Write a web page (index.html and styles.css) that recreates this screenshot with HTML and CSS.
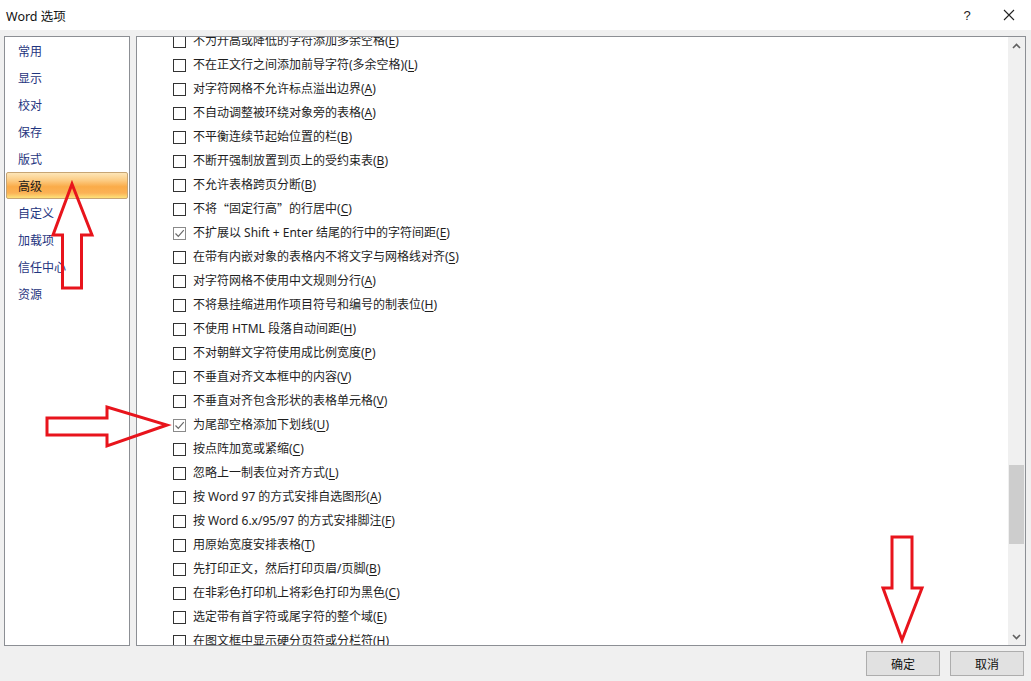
FILE: index.html
```html
<!DOCTYPE html>
<html lang="zh-CN">
<head>
<meta charset="utf-8">
<title>Word 选项</title>
<link rel="stylesheet" href="styles.css">
</head>
<body>
<div class="window">
  <div class="titlebar">
    <span class="title">Word 选项</span>
    <span class="tb-help">?</span>
    <span class="tb-close"><svg width="12" height="12" viewBox="0 0 12 12"><path d="M1 1 L11 11 M11 1 L1 11" stroke="#222" stroke-width="1.1" fill="none"/></svg></span>
  </div>
  <div class="main">
    <nav class="nav">
      <div class="nav-item">常用</div>
      <div class="nav-item">显示</div>
      <div class="nav-item">校对</div>
      <div class="nav-item">保存</div>
      <div class="nav-item">版式</div>
      <div class="nav-item active">高级</div>
      <div class="nav-item">自定义</div>
      <div class="nav-item">加载项</div>
      <div class="nav-item">信任中心</div>
      <div class="nav-item">资源</div>
    </nav>
    <section class="content">
      <div class="scroll-area">
        <ul class="opts">
          <li><span class="cb"></span>不为升高或降低的字符添加多余空格(<u>E</u>)</li>
          <li><span class="cb"></span>不在正文行之间添加前导字符(多余空格)(<u>L</u>)</li>
          <li><span class="cb"></span>对字符网格不允许标点溢出边界(<u>A</u>)</li>
          <li><span class="cb"></span>不自动调整被环绕对象旁的表格(<u>A</u>)</li>
          <li><span class="cb"></span>不平衡连续节起始位置的栏(<u>B</u>)</li>
          <li><span class="cb"></span>不断开强制放置到页上的受约束表(<u>B</u>)</li>
          <li><span class="cb"></span>不允许表格跨页分断(<u>B</u>)</li>
          <li><span class="cb"></span>不将<span class="q">“</span>固定行高<span class="q">”</span>的行居中(<u>C</u>)</li>
          <li><span class="cb checked"><svg width="11" height="11" viewBox="0 0 11 11"><path d="M1.5 5.5 L4.3 8.3 L9.8 2.2" stroke="#6a6a6a" stroke-width="1.2" fill="none"/></svg></span>不扩展以 Shift + Enter 结尾的行中的字符间距(<u>E</u>)</li>
          <li><span class="cb"></span>在带有内嵌对象的表格内不将文字与网格线对齐(<u>S</u>)</li>
          <li><span class="cb"></span>对字符网格不使用中文规则分行(<u>A</u>)</li>
          <li><span class="cb"></span>不将悬挂缩进用作项目符号和编号的制表位(<u>H</u>)</li>
          <li><span class="cb"></span>不使用 HTML 段落自动间距(<u>H</u>)</li>
          <li><span class="cb"></span>不对朝鲜文字符使用成比例宽度(<u>P</u>)</li>
          <li><span class="cb"></span>不垂直对齐文本框中的内容(<u>V</u>)</li>
          <li><span class="cb"></span>不垂直对齐包含形状的表格单元格(<u>V</u>)</li>
          <li><span class="cb checked"><svg width="11" height="11" viewBox="0 0 11 11"><path d="M1.5 5.5 L4.3 8.3 L9.8 2.2" stroke="#6a6a6a" stroke-width="1.2" fill="none"/></svg></span>为尾部空格添加下划线(<u>U</u>)</li>
          <li><span class="cb"></span>按点阵加宽或紧缩(<u>C</u>)</li>
          <li><span class="cb"></span>忽略上一制表位对齐方式(<u>L</u>)</li>
          <li><span class="cb"></span>按 Word 97 的方式安排自选图形(<u>A</u>)</li>
          <li><span class="cb"></span>按 Word 6.x/95/97 的方式安排脚注(<u>F</u>)</li>
          <li><span class="cb"></span>用原始宽度安排表格(<u>T</u>)</li>
          <li><span class="cb"></span>先打印正文，然后打印页眉/页脚(<u>B</u>)</li>
          <li><span class="cb"></span>在非彩色打印机上将彩色打印为黑色(<u>C</u>)</li>
          <li><span class="cb"></span>选定带有首字符或尾字符的整个域(<u>E</u>)</li>
          <li><span class="cb"></span>在图文框中显示硬分页符或分栏符(<u>H</u>)</li>
        </ul>
      </div>
      <div class="scrollbar">
        <div class="sb-btn"><svg width="9" height="6" viewBox="0 0 9 6"><path d="M1 5 L4.5 1.5 L8 5" stroke="#606060" stroke-width="1.6" fill="none"/></svg></div>
        <div class="sb-track">
          <div class="sb-thumb"></div>
        </div>
        <div class="sb-btn"><svg width="9" height="6" viewBox="0 0 9 6"><path d="M1 1 L4.5 4.5 L8 1" stroke="#606060" stroke-width="1.6" fill="none"/></svg></div>
      </div>
    </section>
  </div>
  <div class="footer">
    <button class="btn">确定</button>
    <button class="btn">取消</button>
  </div>
</div>
<svg class="annot" width="1031" height="681" viewBox="0 0 1031 681">
  <g fill="none" stroke="#e8141c" stroke-width="3" stroke-linejoin="miter">
    <path d="M72 184 L92 235 L81.5 235 L81.5 288 L62.5 288 L62.5 235 L53 235 Z"/>
    <path d="M47 418 L107 418 L107 407 L167 425 L107 446 L107 435 L47 435 Z"/>
    <path d="M892 537 L912 537 L912 588 L922 588 L902 640 L883 588 L892 588 Z"/>
  </g>
</svg>
</body>
</html>
```
FILE: styles.css
```css
* { box-sizing: border-box; }
html, body { margin: 0; padding: 0; }
body {
  width: 1031px;
  height: 681px;
  background: #f0f0f0;
  font-family: "Noto Sans", "Noto Sans CJK SC", sans-serif;
  font-size: 12px;
  color: #1e1e1e;
  overflow: hidden;
  position: relative;
}
.window { display: flex; flex-direction: column; height: 681px; }
.titlebar {
  height: 30px;
  background: #ffffff;
  display: flex;
  align-items: center;
  padding-left: 6px;
  padding-right: 16px;
}
.title { font-size: 12.5px; color: #111; flex: 1; }
.tb-help { font-size: 13px; color: #222; width: 20px; text-align: center; margin-right: 26px; font-family: "Liberation Sans", sans-serif; }
.tb-close { width: 12px; height: 12px; display: flex; }
.main {
  display: flex;
  gap: 6px;
  padding: 6px 5px 0 4px;
  height: 616px;
}
.nav {
  width: 126px;
  height: 610px;
  background: #fff;
  border: 1px solid #8c8f94;
  padding: 0 0 0 1px;
  font-family: "Noto Sans CJK SC", sans-serif;
}
.nav-item {
  height: 27px;
  line-height: 27px;
  padding-left: 12px;
  color: #1f3580;
  margin-right: 1px;
}
.nav-item.active {
  background: linear-gradient(#fde6b8 0%, #fccb82 30%, #faab48 55%, #fbb256 80%, #fde27a 100%);
  border: 1px solid #c7a574;
  border-radius: 2px;
  line-height: 25px;
  padding-left: 11px;
  color: #1a1a1a;
}
.content {
  flex: 1;
  height: 610px;
  background: #fff;
  border: 1px solid #8c8f94;
  display: flex;
  overflow: hidden;
}
.scroll-area { flex: 1; overflow: hidden; }
.opts {
  list-style: none;
  margin: -8px 0 0 0;
  padding: 0 0 0 36px;
}
.opts li {
  height: 24px;
  line-height: 24px;
  display: flex;
  align-items: center;
  white-space: nowrap;
  color: #1e1e1e;
}
.opts .q { font-family: "Noto Sans CJK SC", sans-serif; }
.opts u { text-decoration-thickness: 1px; text-underline-offset: 2px; }
.cb {
  width: 13px;
  height: 13px;
  border: 1px solid #333;
  background: #fff;
  margin-right: 7px;
  margin-top: 1px;
  flex: none;
  display: flex;
  align-items: center;
  justify-content: center;
}
.cb.checked { border-color: #8a8a8a; }
.scrollbar {
  width: 17px;
  background: #f0f0f0;
  display: flex;
  flex-direction: column;
}
.sb-btn { height: 17px; display: flex; align-items: center; justify-content: center; }
.sb-track { flex: 1; padding-top: 411px; display: flex; justify-content: center; }
.sb-thumb { width: 15px; height: 79px; background: #cdcdcd; }
.footer {
  display: flex;
  justify-content: flex-end;
  gap: 10px;
  padding: 5px 7px 0 0;
}
.btn {
  width: 74px;
  height: 25px;
  background: #e1e1e1;
  border: 1px solid #adadad;
  font-family: "Noto Sans CJK SC", sans-serif;
  font-size: 12px;
  color: #111;
  padding: 0;
}
.annot { position: absolute; left: 0; top: 0; pointer-events: none; }
```
